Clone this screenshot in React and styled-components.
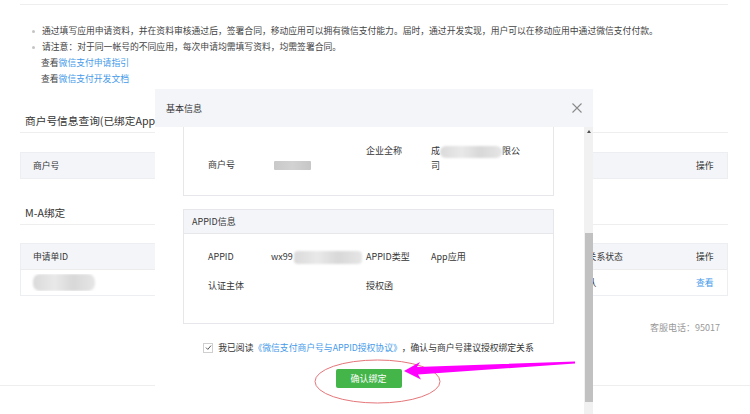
import React from "react"
import styled, { createGlobalStyle } from "styled-components"

const GlobalStyle = createGlobalStyle`
  html, body {
    margin: 0;
    padding: 0;
    overflow: hidden;
    background: #fff;
  }
  body {
    font-family: "Noto Sans CJK SC", "Noto Sans", sans-serif;
    color: #353535;
  }
`

const Screen = styled.div`
  position: relative;
  width: 750px;
  height: 414px;
  overflow: hidden;
`

const Page = styled.div`
  margin: 0 22px 0 20px;
  padding-top: 4px;
`

const Rule = styled.div`
  border-top: 1px solid #eeeeee;
`

const Notes = styled.ul`
  list-style: none;
  margin: 18px 0 0;
  padding: 0;
  font-size: 8.8px;
  line-height: 16px;
  color: #444;
`

const Note = styled.li`
  display: flex;
  align-items: center;
  padding-left: ${p => (p.$plain ? "21px" : "12px")};
  white-space: nowrap;
`

const Dot = styled.span`
  flex: none;
  width: 3px;
  height: 3px;
  border-radius: 50%;
  background: #c4c4c4;
  margin-right: 7px;
`

const Link = styled.a`
  color: #459ae9;
  text-decoration: none;
`

const SectionTitle = styled.h3`
  margin: ${p => p.$top}px 0 0;
  padding: 0 0 3px 5px;
  font-size: 10.7px;
  font-weight: normal;
  line-height: 16px;
  color: #333;
  border-bottom: 1px solid #eeeeee;
  white-space: nowrap;
`

const Table = styled.div`
  margin-top: ${p => p.$top}px;
  border: 1px solid #eceef2;
  font-size: 8.8px;
`

const Row = styled.div`
  display: grid;
  grid-template-columns: ${p => p.$cols};
  height: 25px;
  align-items: center;
  background: ${p => (p.$head ? "#f4f5f9" : "#fff")};
  border-top: ${p => (p.$head ? "none" : "1px solid #ececec")};
`

const Cell = styled.div`
  padding-left: 12px;
  white-space: nowrap;
  overflow: hidden;
  color: ${p => (p.$link ? "#459ae9" : "#353535")};
`

const Blur = styled.span`
  display: inline-block;
  vertical-align: middle;
  width: ${p => p.$w}px;
  height: ${p => p.$h}px;
  margin-left: ${p => p.$ml || 0}px;
  border-radius: ${p => p.$r ?? 6}px;
  background: ${p =>
    p.$dark
      ? "linear-gradient(90deg, #c9c9c9, #d2d2d2 50%, #c6c6c6)"
      : "linear-gradient(90deg, #dadada, #e9e9e9 35%, #d8d8d8 65%, #e6e6e6)"};
  filter: blur(${p => (p.$dark ? 0.5 : 1)}px);
`

const Hotline = styled.div`
  margin-top: 24px;
  padding-right: 8px;
  text-align: right;
  font-size: 9px;
  line-height: 15px;
  color: #999;
`

const Footer = styled.div`
  margin-top: 50px;
  border-top: 1px solid #eeeeee;
`

/* ---------- modal ---------- */

const Modal = styled.section`
  position: absolute;
  left: 155px;
  top: 89px;
  width: 438px;
  height: 345px;
  background: #fff;
  display: flex;
  flex-direction: column;
`

const ModalHead = styled.header`
  flex: none;
  height: 38px;
  display: flex;
  align-items: center;
  justify-content: space-between;
  padding: 0 11px;
  background: #f4f5f9;
  font-size: 9px;
  color: #353535;
`

const CloseBtn = styled.button`
  border: 0;
  padding: 0;
  background: none;
  display: flex;
  width: 10px;
  height: 10px;
`

const ModalBody = styled.div`
  flex: 1;
  min-height: 0;
  display: flex;
`

const Scroller = styled.div`
  flex: 1;
  overflow: hidden;
  padding: 0 30px 60px 28px;
`

const Track = styled.div`
  flex: none;
  width: 9px;
  background: #f1f1f1;
  display: flex;
  flex-direction: column;
  align-items: center;
`

const TrackArrow = styled.span`
  margin-top: 3px;
  border-left: 2px solid transparent;
  border-right: 2px solid transparent;
  border-bottom: 3px solid #505050;
`

const Thumb = styled.div`
  width: 8px;
  height: 169px;
  margin-top: 100px;
  background: #c1c1c1;
`

const Card = styled.div`
  border: 1px solid #e7e7eb;
  margin-top: ${p => p.$top || 0}px;
  font-size: 9px;
  line-height: 15px;
`

const CardHead = styled.div`
  height: 23px;
  line-height: 23px;
  padding-left: 8px;
  background: #f4f5f9;
  border-bottom: 1px solid #e7e7eb;
`

const Fields = styled.div`
  display: grid;
  grid-template-columns: 63px 95px 65px 1fr;
  row-gap: 14px;
  align-items: start;
  padding: ${p => p.$pad};
`

const Field = styled.div`
  margin-top: ${p => p.$drop || 0}px;
  white-space: nowrap;
`

const Agree = styled.div`
  margin-top: 16px;
  display: flex;
  justify-content: center;
  align-items: center;
  font-size: 8.8px;
  line-height: 15px;
  white-space: nowrap;
  color: #353535;
`

const CheckBox = styled.span`
  flex: none;
  width: 8px;
  height: 8px;
  margin-right: 5px;
  border: 1px solid #cfcfcf;
  display: flex;
  align-items: center;
  justify-content: center;
`

const Confirm = styled.button`
  display: block;
  margin: 14px auto 0;
  width: 66px;
  height: 19px;
  padding: 0;
  border: 0;
  border-radius: 2px;
  background: #44b549;
  color: #fff;
  font-family: inherit;
  font-size: 9px;
`

const Annotations = styled.svg`
  position: absolute;
  left: 0;
  top: 0;
  width: 750px;
  height: 414px;
  pointer-events: none;
`

const COLS1 = "663px 1fr"
const COLS2 = "537px 126px 1fr"

const App = () => {
  return (
    <React.Fragment>
      <GlobalStyle />
      <Screen>
        <Page>
          <Rule />
          <Notes>
            <Note>
              <Dot />
              通过填写应用申请资料，并在资料审核通过后，签署合同，移动应用可以拥有微信支付能力。届时，通过开发实现，用户可以在移动应用中通过微信支付付款。
            </Note>
            <Note>
              <Dot />
              请注意：对于同一帐号的不同应用，每次申请均需填写资料，均需签署合同。
            </Note>
            <Note $plain>
              查看<Link href="#">微信支付申请指引</Link>
            </Note>
            <Note $plain>
              查看<Link href="#">微信支付开发文档</Link>
            </Note>
          </Notes>

          <SectionTitle $top={26}>商户号信息查询(已绑定Appid)</SectionTitle>
          <Table $top={19}>
            <Row $head $cols={COLS1}>
              <Cell>商户号</Cell>
              <Cell>操作</Cell>
            </Row>
          </Table>

          <SectionTitle $top={26}>M-A绑定</SectionTitle>
          <Table $top={18}>
            <Row $head $cols={COLS2}>
              <Cell>申请单ID</Cell>
              <Cell>绑定关系状态</Cell>
              <Cell>操作</Cell>
            </Row>
            <Row $cols={COLS2}>
              <Cell>
                <Blur $w={62} $h={17} $r={7} />
              </Cell>
              <Cell>待确认</Cell>
              <Cell $link>查看</Cell>
            </Row>
          </Table>

          <Hotline>客服电话：95017</Hotline>
        </Page>
        <Footer />

        <Modal>
          <ModalHead>
            基本信息
            <CloseBtn aria-label="关闭">
              <svg width="10" height="10" viewBox="0 0 10 10">
                <path d="M0.5 0.5 L9.5 9.5 M9.5 0.5 L0.5 9.5" stroke="#8a8a8a" strokeWidth="1.1" />
              </svg>
            </CloseBtn>
          </ModalHead>
          <ModalBody>
            <Scroller ref={el => { if (el) el.scrollTop = 2 }}>
              <Card>
                <Fields $pad="17px 0 22px 24px">
                  <Field $drop={14}>商户号</Field>
                  <Field $drop={14}>
                    <Blur $dark $w={37} $h={9} $r={1} $ml={3} />
                  </Field>
                  <Field>企业全称</Field>
                  <Field>
                    <div>
                      成<Blur $w={62} $h={12} />限公
                    </div>
                    <div>司</div>
                  </Field>
                </Fields>
              </Card>

              <Card $top={13}>
                <CardHead>APPID信息</CardHead>
                <Fields $pad="15px 0 30px 24px">
                  <Field>APPID</Field>
                  <Field>
                    wx99<Blur $w={68} $h={13} $r={4} $ml={1} />
                  </Field>
                  <Field>APPID类型</Field>
                  <Field>App应用</Field>
                  <Field>认证主体</Field>
                  <Field />
                  <Field>授权函</Field>
                  <Field />
                </Fields>
              </Card>

              <Agree>
                <CheckBox>
                  <svg width="7" height="7" viewBox="0 0 7 7">
                    <polyline points="1,3.6 2.8,5.4 6,1.6" fill="none" stroke="#555" strokeWidth="1" />
                  </svg>
                </CheckBox>
                我已阅读<Link href="#">《微信支付商户号与APPID授权协议》</Link>，确认与商户号建议授权绑定关系
              </Agree>
              <Confirm>确认绑定</Confirm>
            </Scroller>
            <Track>
              <TrackArrow />
              <Thumb />
            </Track>
          </ModalBody>
        </Modal>

        <Annotations viewBox="0 0 750 414">
          <ellipse cx="377.5" cy="381.5" rx="62.5" ry="21.5" fill="none" stroke="#e5767a" strokeWidth="1" />
          <polygon
            points="404,371 420,362 417,367 575,361.5 575,363.5 418,374.5 421,379.5"
            fill="#f0f"
          />
        </Annotations>
      </Screen>
    </React.Fragment>
  )
}

export default App
